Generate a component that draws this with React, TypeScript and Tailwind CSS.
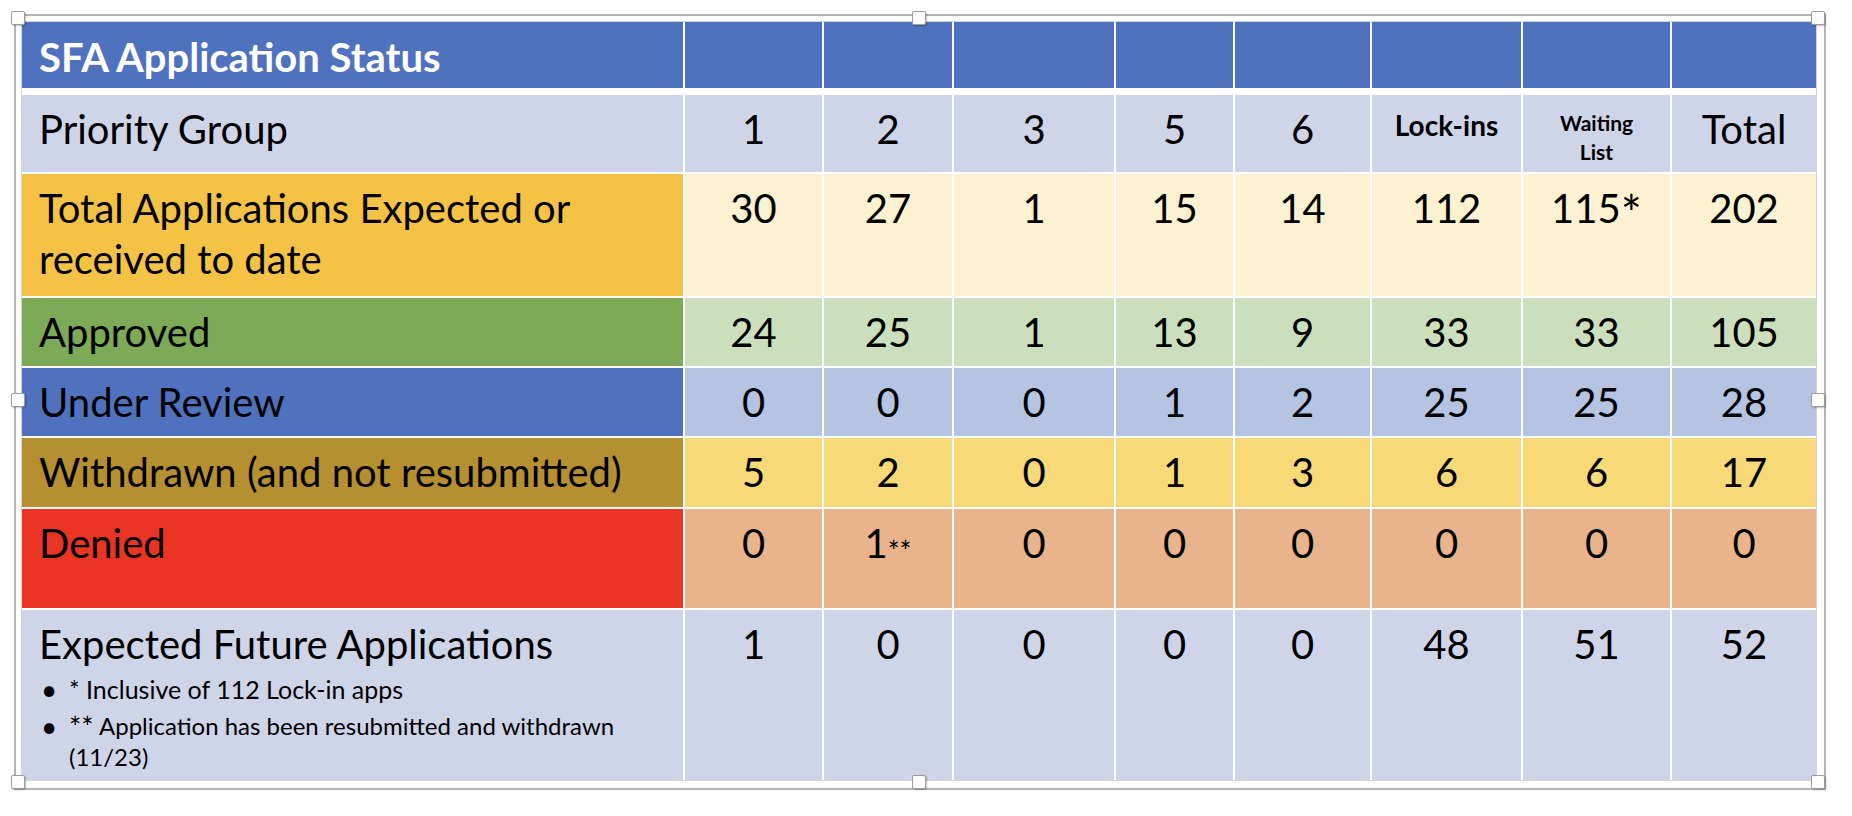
import type { ReactNode } from "react"

const grid =
  "grid grid-cols-[661px_137px_128px_160px_117px_135px_149px_147px_144px] gap-x-[2px]"

type Row = {
  label: ReactNode
  labelBg: string
  valueBg: string
  height: string
  values: ReactNode[]
}

const rows: Row[] = [
  {
    label: "Priority Group",
    labelBg: "bg-[#cfd5e8]",
    valueBg: "bg-[#cfd5e8]",
    height: "h-[77px]",
    values: [
      "1",
      "2",
      "3",
      "5",
      "6",
      <span key="l" className="block pt-[7px] text-[28px] leading-[28px] font-bold">Lock-ins</span>,
      <span key="w" className="block pt-[4px] text-[21px] leading-[29px] font-bold">
        Waiting
        <br />
        List
      </span>,
      "Total",
    ],
  },
  {
    label: (
      <>
        Total Applications Expected or
        <br />
        received to date
      </>
    ),
    labelBg: "bg-[#f4c244]",
    valueBg: "bg-[#fcf1d1]",
    height: "h-[122px]",
    values: [
      "30",
      "27",
      "1",
      "15",
      "14",
      "112",
      <>
        115<span className="align-[-9px] text-[50px] leading-[0]">*</span>
      </>,
      "202",
    ],
  },
  {
    label: "Approved",
    labelBg: "bg-[#7caa56]",
    valueBg: "bg-[#ccdfbd]",
    height: "h-[68px]",
    values: ["24", "25", "1", "13", "9", "33", "33", "105"],
  },
  {
    label: "Under Review",
    labelBg: "bg-[#4f71be]",
    valueBg: "bg-[#b5c4e3]",
    height: "h-[68px]",
    values: ["0", "0", "0", "1", "2", "25", "25", "28"],
  },
  {
    label: "Withdrawn (and not resubmitted)",
    labelBg: "bg-[#b68f31]",
    valueBg: "bg-[#f8d978]",
    height: "h-[69px]",
    values: ["5", "2", "0", "1", "3", "6", "6", "17"],
  },
  {
    label: "Denied",
    labelBg: "bg-[#ea3424]",
    valueBg: "bg-[#e9b38b]",
    height: "h-[99px]",
    values: [
      "0",
      <>
        1<span className="align-[-4px] text-[28px] leading-[0]">**</span>
      </>,
      "0",
      "0",
      "0",
      "0",
      "0",
      "0",
    ],
  },
  {
    label: (
      <>
        Expected Future Applications
        <ul className="mt-[4px] leading-[30px]">
          <li className="flex text-[25px]">
            <span className="w-[30px] shrink-0 pl-[2px] text-[28px]">•</span>
            <span>* Inclusive of 112 Lock-in apps</span>
          </li>
          <li className="mt-[7px] flex text-[24px]">
            <span className="w-[30px] shrink-0 pl-[2px] text-[28px]">•</span>
            <span>
              <span className="align-[-3px] text-[29px]">**</span> Application has been resubmitted and withdrawn
              <br />
              (11/23)
            </span>
          </li>
        </ul>
      </>
    ),
    labelBg: "bg-[#cfd5e8]",
    valueBg: "bg-[#cfd5e8]",
    height: "h-[170px]",
    values: ["1", "0", "0", "0", "0", "48", "51", "52"],
  },
]

function Handle({ pos }: { pos: string }) {
  return (
    <div
      className={`absolute h-[14px] w-[14px] rounded-[2px] border border-[#9c9c9c] bg-white shadow-[1px_1px_2px_rgba(0,0,0,0.25)] ${pos}`}
    />
  )
}

export default function App() {
  return (
    <div className="min-h-screen bg-white pl-[14px] pt-[14px] font-[Lato,sans-serif] text-black">
      {/* Selection frame */}
      <div className="relative w-fit border-2 border-[#b4b4b4] pb-[7px] pl-[5px] pr-[7px] pt-[5px]">
        <div className="border border-[#d6d6d6] bg-white">
          {/* Title row */}
          <div className={`${grid} mb-[7px] h-[66px]`}>
            <div className="bg-[#4f72be] pl-[17px] pt-[11px] text-[40px] font-bold leading-[48px] text-white">
              SFA Application Status
            </div>
            {Array.from({ length: 8 }).map((_, i) => (
              <div key={i} className="bg-[#4f72be]" />
            ))}
          </div>

          <div className="flex flex-col gap-y-[2px]">
            {rows.map((row, r) => (
              <div key={r} className={`${grid} ${row.height}`}>
                <div className={`${row.labelBg} pl-[17px] pt-[9px] text-[40px] leading-[51px]`}>
                  {row.label}
                </div>
                {row.values.map((v, i) => (
                  <div key={i} className={`${row.valueBg} pt-[9px] text-center text-[40px] leading-[51px]`}>
                    {v}
                  </div>
                ))}
              </div>
            ))}
          </div>
        </div>

        <Handle pos="-left-[5px] -top-[5px]" />
        <Handle pos="left-[896px] -top-[5px]" />
        <Handle pos="-right-[1px] -top-[5px]" />
        <Handle pos="-left-[5px] top-[377px]" />
        <Handle pos="-right-[1px] top-[377px]" />
        <Handle pos="-left-[5px] -bottom-[1px]" />
        <Handle pos="left-[896px] -bottom-[1px]" />
        <Handle pos="-right-[1px] -bottom-[1px]" />
      </div>
    </div>
  )
}
